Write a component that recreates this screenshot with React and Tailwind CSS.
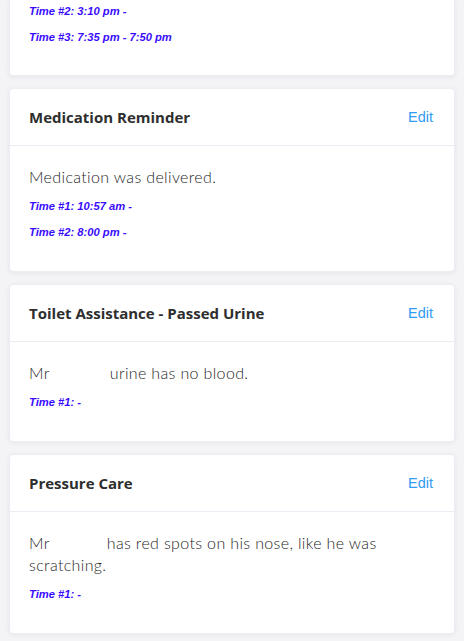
import React from "react";

function TimeLine({ children }) {
  return (
    <p className="mt-[10px] h-4 text-[11.2px] leading-4 font-bold italic text-[#3a0cff] [font-family:'Liberation_Sans',Arial,sans-serif]">
      {children}
    </p>
  );
}

function Card({ title, children, times }) {
  return (
    <div className="mx-[9px] bg-white border border-[#ececf2] rounded-[4px] shadow-[0_1px_5px_rgba(40,40,80,0.07)]">
      <div className="h-[57px] flex items-center justify-between pl-[19px] pr-[21px] border-b border-[#ececf4]">
        <h2 className="text-[15px] font-bold text-[#2e2e2e] [font-family:'Open_Sans','Noto_Sans',sans-serif]">{title}</h2>
        <button className="pt-[2px] text-[14.5px] text-[#2f9bf3] [font-family:'Liberation_Sans',Arial,sans-serif]">Edit</button>
      </div>
      <div className="pl-[19px] pr-[21px] pt-5 pb-[31px]">
        <p className="text-[16px] leading-[22px] font-light tracking-[0.35px] text-[#1f1f1f] [font-family:Lato,'Noto_Sans',sans-serif]">
          {children}
        </p>
        {times.map((t) => (
          <TimeLine key={t}>{t}</TimeLine>
        ))}
      </div>
    </div>
  );
}

export default function App() {
  return (
    <div className="w-[464px] min-h-[641px] bg-[#f4f4f7] pb-[7px] flex flex-col gap-3">
      <div className="mx-[9px] bg-white border border-t-0 border-[#ececf2] rounded-b-[4px] shadow-[0_1px_5px_rgba(40,40,80,0.07)] pl-[19px] pb-[30px]">
        <div className="-mt-[7px]">
          <TimeLine>Time #2: 3:10 pm -</TimeLine>
          <TimeLine>Time #3: 7:35 pm - 7:50 pm</TimeLine>
        </div>
      </div>
      <Card title="Medication Reminder" times={["Time #1: 10:57 am -", "Time #2: 8:00 pm -"]}>
        Medication was delivered.
      </Card>
      <Card title="Toilet Assistance - Passed Urine" times={["Time #1: -"]}>
        Mr<span className="inline-block w-[60px]"></span>urine has no blood.
      </Card>
      <Card title="Pressure Care" times={["Time #1: -"]}>
        Mr<span className="inline-block w-[57px]"></span>has red spots on his nose, like he was scratching.
      </Card>
    </div>
  );
}
